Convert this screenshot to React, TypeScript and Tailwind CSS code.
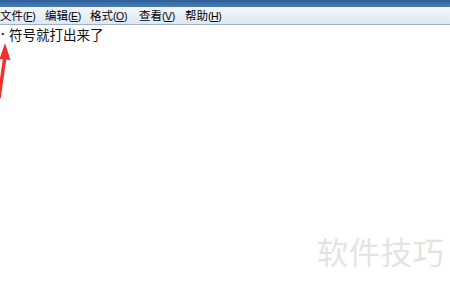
export default function App() {
  const menus = [
    { label: "文件", key: "F", w: "w-[45px]" },
    { label: "编辑", key: "E", w: "w-[45px]" },
    { label: "格式", key: "O", w: "w-[49px]" },
    { label: "查看", key: "V", w: "w-[46px]" },
    { label: "帮助", key: "H", w: "w-[46px]" },
  ];

  return (
    <div
      className="relative w-[450px] h-[288px] overflow-hidden bg-white"
      style={{ fontFamily: '"Noto Sans CJK SC", "Noto Sans", sans-serif' }}
    >
      {/* title bar edge */}
      <div className="h-[7px] bg-gradient-to-b from-[#2f5f98] to-[#4a7fb8]" />

      {/* menu bar */}
      <div className="h-[18px] flex items-center bg-gradient-to-b from-[#f4f7fb] to-[#dfe7f2] border-b border-[#9fb2cc] text-[11.5px] leading-none text-black">
        {menus.map((m) => (
          <span key={m.key} className={`${m.w} shrink-0 whitespace-nowrap`}>
            {m.label}
            <span className="text-[10.5px] tracking-[-0.4px]" style={{ fontFamily: '"Liberation Sans", sans-serif' }}>
              (<span className="underline">{m.key}</span>)
            </span>
          </span>
        ))}
      </div>

      {/* text content */}
      <div className="flex items-center text-[13.5px] leading-[18px] text-[#111]">
        <span className="w-[9px] pl-[1px] text-[13px] font-bold" style={{ fontFamily: '"Liberation Sans", sans-serif' }}>·</span>
        <span>符号就打出来了</span>
      </div>

      {/* red arrow */}
      <svg className="absolute left-0 top-[40px]" width="20" height="60" viewBox="0 0 20 60">
        <path d="M-1 58 L5 16" stroke="#f0302c" strokeWidth="3.5" fill="none" />
        <path d="M5 3 L10.5 20 L-0.5 19 Z" fill="#f0302c" />
      </svg>

      {/* watermark */}
      <div className="absolute right-[5px] bottom-[14px] text-[31px] tracking-[1px] text-[#e3e3e3]">
        软件技巧
      </div>
    </div>
  );
}
